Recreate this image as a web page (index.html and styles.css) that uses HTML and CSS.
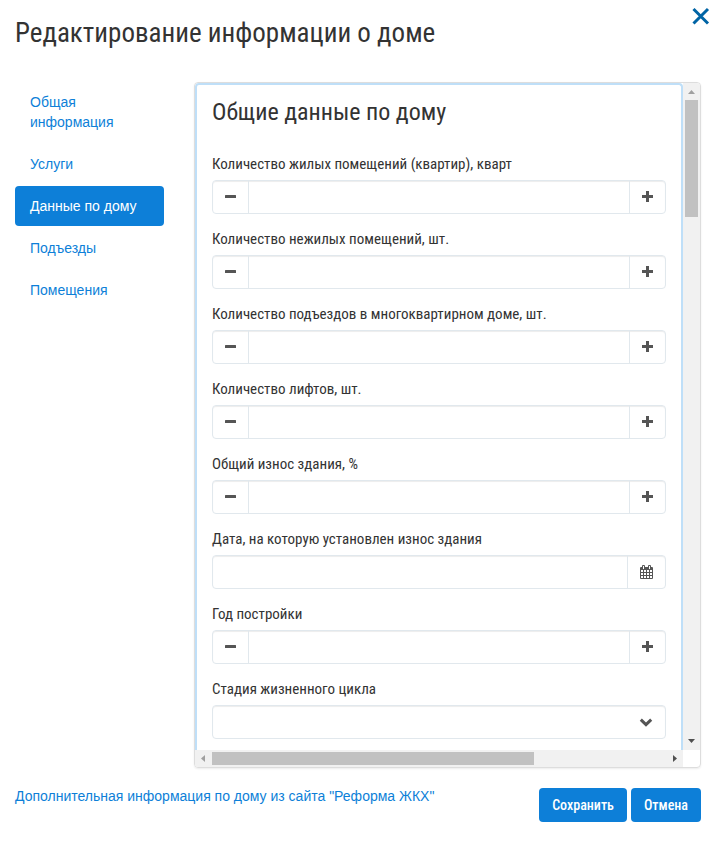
FILE: index.html
```html
<!DOCTYPE html>
<html lang="ru">
<head>
<meta charset="utf-8">
<meta name="viewport" content="width=device-width, initial-scale=1">
<title>Редактирование информации о доме</title>
<link rel="stylesheet" href="styles.css">
</head>
<body>
<svg class="sprite" aria-hidden="true">
  <symbol id="minus" viewBox="0 0 12 12"><rect x="0" y="4" width="11" height="3" rx=".5"/></symbol>
  <symbol id="plus" viewBox="0 0 12 12"><path d="M4 0h3v4h4v3H7v4H4V7H0V4h4z"/></symbol>
</svg>
<main class="dialog">
  <header class="dialog-header">
    <h1>Редактирование информации о доме</h1>
    <button class="close" type="button" aria-label="Закрыть"><svg viewBox="0 0 18 18"><path d="M1.500 2l14.500 14.500M16 2L1.500 16.500"/></svg></button>
  </header>
  <div class="dialog-body">
    <nav class="tabs">
      <a href="#general">Общая информация</a>
      <a href="#services">Услуги</a>
      <a class="active" href="#house">Данные по дому</a>
      <a href="#entrances">Подъезды</a>
      <a href="#rooms">Помещения</a>
    </nav>
    <section class="panel" id="house">
      <form class="panel-form" id="house-form">
        <h2>Общие данные по дому</h2>
        <div class="field">
          <label for="f1">Количество жилых помещений (квартир), кварт</label>
          <div class="group"><button type="button" aria-label="Меньше"><svg><use href="#minus"/></svg></button><input id="f1" type="text"><button type="button" aria-label="Больше"><svg><use href="#plus"/></svg></button></div>
        </div>
        <div class="field">
          <label for="f2">Количество нежилых помещений, шт.</label>
          <div class="group"><button type="button" aria-label="Меньше"><svg><use href="#minus"/></svg></button><input id="f2" type="text"><button type="button" aria-label="Больше"><svg><use href="#plus"/></svg></button></div>
        </div>
        <div class="field">
          <label for="f3">Количество подъездов в многоквартирном доме, шт.</label>
          <div class="group"><button type="button" aria-label="Меньше"><svg><use href="#minus"/></svg></button><input id="f3" type="text"><button type="button" aria-label="Больше"><svg><use href="#plus"/></svg></button></div>
        </div>
        <div class="field">
          <label for="f4">Количество лифтов, шт.</label>
          <div class="group"><button type="button" aria-label="Меньше"><svg><use href="#minus"/></svg></button><input id="f4" type="text"><button type="button" aria-label="Больше"><svg><use href="#plus"/></svg></button></div>
        </div>
        <div class="field">
          <label for="f5">Общий износ здания, %</label>
          <div class="group"><button type="button" aria-label="Меньше"><svg><use href="#minus"/></svg></button><input id="f5" type="text"><button type="button" aria-label="Больше"><svg><use href="#plus"/></svg></button></div>
        </div>
        <div class="field">
          <label for="f6">Дата, на которую установлен износ здания</label>
          <div class="group"><input id="f6" type="text"><button class="calendar" type="button" aria-label="Выбрать дату"><svg viewBox="0 0 13 14"><path fill-rule="evenodd" d="M1 2h1V1a1 1 0 0 1 1-1h1a1 1 0 0 1 1 1v1h3V1a1 1 0 0 1 1-1h1a1 1 0 0 1 1 1v1h1a1 1 0 0 1 1 1v10a1 1 0 0 1-1 1H1a1 1 0 0 1-1-1V3a1 1 0 0 1 1-1zM3 1v3h1V1zM9 1v3h1V1zM1 5v2h2V5zM4 5v2h2V5zM7 5v2h2V5zM10 5v2h2V5zM1 8v2h2V8zM4 8v2h2V8zM7 8v2h2V8zM10 8v2h2V8zM1 11v2h2v-2zM4 11v2h2v-2zM7 11v2h2v-2zM10 11v2h2v-2z"/></svg></button></div>
        </div>
        <div class="field">
          <label for="f7">Год постройки</label>
          <div class="group"><button type="button" aria-label="Меньше"><svg><use href="#minus"/></svg></button><input id="f7" type="text"><button type="button" aria-label="Больше"><svg><use href="#plus"/></svg></button></div>
        </div>
        <div class="field">
          <label for="f8">Стадия жизненного цикла</label>
          <div class="group select"><select id="f8"><option></option></select><svg viewBox="0 0 14 9"><path d="M1.800 1.700L7 6.700l5.200-5"/></svg></div>
        </div>
      </form>
      <div class="bar vertical" aria-hidden="true"><svg viewBox="0 0 7 4"><path fill="#a0a0a0" d="M0 4h7L3.500 0z"/></svg><span class="track"><span class="thumb"></span></span><svg viewBox="0 0 7 4"><path d="M0 0h7L3.500 4z"/></svg></div>
      <div class="bar horizontal" aria-hidden="true"><svg viewBox="0 0 4 7"><path fill="#a0a0a0" d="M4 0v7L0 3.500z"/></svg><span class="track"><span class="thumb"></span></span><svg viewBox="0 0 4 7"><path d="M0 0v7l4-3.500z"/></svg></div>
    </section>
  </div>
  <footer class="dialog-footer">
    <a href="#reforma">Дополнительная информация по дому из сайта "Реформа ЖКХ"</a>
    <div class="actions">
      <button type="submit" form="house-form">Сохранить</button>
      <button type="button">Отмена</button>
    </div>
  </footer>
</main>
</body>
</html>
```
FILE: styles.css
```css
* { box-sizing: border-box; }

body {
  margin: 0;
  background: #fff;
  color: #333;
  font: 14px/20px "Liberation Sans", Arial, sans-serif;
}

a { color: #0d7fd8; text-decoration: none; }
button { margin: 0; padding: 0; border: 0; cursor: pointer; }
svg { display: block; }
.sprite { display: none; }

h1, h2, label, .actions button {
  font-family: "Roboto Condensed", "Liberation Sans Narrow", sans-serif;
}

.dialog { padding: 0 13px 24px 15px; }

.dialog-header {
  display: flex;
  justify-content: space-between;
  height: 82px;
  margin-right: -9px;
}

h1 { margin: 18px 0 0; font-size: 27px; line-height: 30px; font-weight: 400; }

.close { width: 18px; height: 18px; margin-top: 7px; background: none; }
.close svg { width: 18px; height: 18px; fill: none; stroke: #0064a5; stroke-width: 3; }

.dialog-body { display: flex; gap: 30px; }

.tabs { display: flex; flex: 0 0 149px; flex-direction: column; gap: 2px; }
.tabs a { padding: 10px 15px; border-radius: 4px; }
.tabs .active { background: #0d7fd8; color: #fff; }

.panel {
  display: grid;
  flex: 1;
  min-width: 0;
  grid-template-columns: 1fr 17px;
  grid-template-rows: auto 17px;
  overflow: hidden;
  border: 1px solid #ddd;
  border-radius: 4px;
  box-shadow: 0 1px 2px rgba(0, 0, 0, .08);
}

.panel-form {
  min-width: 0;
  padding: 12px 15px 11px;
  border: 2px solid #bfdff8;
  border-bottom: 0;
  border-radius: 4px 4px 0 0;
}

h2 { margin: 0 0 27px; font-size: 24px; line-height: 30px; font-weight: 400; }

.field + .field { margin-top: 15px; }
label { display: block; margin-bottom: 6px; font-size: 15px; }

.group {
  display: flex;
  height: 34px;
  overflow: hidden;
  border: 1px solid #e1e8ed;
  border-radius: 4px;
  box-shadow: inset 0 1px 1px rgba(0, 0, 0, .075);
}
.group input, .group select {
  flex: 1;
  min-width: 0;
  padding: 6px 12px;
  border: 0;
  background: transparent;
  font: inherit;
  color: #555;
  appearance: none;
}
.group button {
  display: grid;
  flex: 0 0 36px;
  place-items: center;
  background: transparent;
  color: #555;
}
.group button:first-child { border-right: 1px solid #e1e8ed; }
.group button:last-child { border-left: 1px solid #e1e8ed; }
.group .calendar { flex-basis: 38px; }
.group svg { width: 12px; height: 12px; fill: #555; }
.group .calendar svg { width: 13px; height: 14px; }
.group.select { align-items: center; padding-right: 12px; }
.group.select svg { width: 14px; height: 9px; fill: none; stroke: #555; stroke-width: 3; }

.bar { display: flex; align-items: center; background: #f1f1f1; }
.bar svg { flex: none; fill: #505050; }
.track { flex: 1; }
.thumb { display: block; background: #c1c1c1; }
.vertical { flex-direction: column; padding: 7px 0; gap: 6px; }
.vertical svg { width: 7px; height: 4px; }
.vertical .thumb { width: 13px; height: 117px; }
.horizontal { padding: 0 6px; gap: 7px; }
.horizontal svg { width: 4px; height: 7px; }
.horizontal .thumb { width: 71%; height: 13px; }

.dialog-footer {
  display: flex;
  justify-content: space-between;
  align-items: flex-start;
  padding-top: 20px;
}
.dialog-footer a { margin-top: -2px; }
.actions { display: flex; gap: 4px; }
.actions button {
  height: 34px;
  padding: 0 13px;
  border-radius: 4px;
  background: #0d7fd8;
  color: #fff;
  font-size: 14px;
  font-weight: 500;
}
```
